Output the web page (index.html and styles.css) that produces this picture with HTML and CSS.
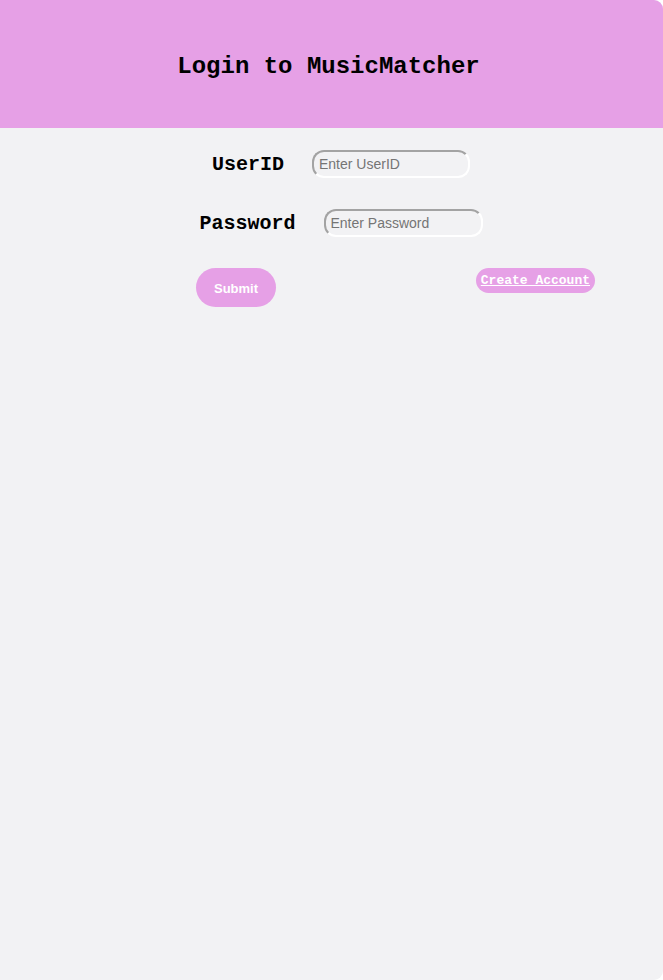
FILE: index.html
```html
<!DOCTYPE html>
<html>
<head>
<meta charset="utf-8">
<title>Login</title>
<link rel="stylesheet" href="styles.css">
</head>
<body>
<div class="page">
  <header class="header">
    <h2 class="title">Login to MusicMatcher</h2>
  </header>
  <form class="form">
    <div class="row">
      <label class="label" for="uid">UserID</label>
      <input class="field field-user" id="uid" type="text" placeholder="Enter UserID">
    </div>
    <div class="row">
      <label class="label" for="pwd">Password</label>
      <input class="field field-pass" id="pwd" type="password" placeholder="Enter Password">
    </div>
    <div class="actions">
      <button class="submit" type="button">Submit</button>
      <a class="create" href="#">Create Account</a>
    </div>
  </form>
</div>
</body>
</html>
```

FILE: styles.css
```css
html, body {
  margin: 0;
  padding: 0;
  background: #ffffff;
}
.page {
  width: 663px;
  height: 980px;
  background: #f2f2f4;
  border-radius: 0 9px 9px 0;
  overflow: hidden;
}
.header {
  height: 128px;
  background: #e6a0e6;
  display: flex;
  align-items: center;
  justify-content: center;
}
.title {
  margin: 0;
  font-family: "Liberation Mono", "Courier New", monospace;
  font-weight: bold;
  font-size: 24px;
  color: #000;
  padding: 4px 6px 0 0;
}
.form {
  display: flex;
  flex-direction: column;
  gap: 31px;
  padding-top: 22px;
}
.row {
  display: flex;
  align-items: center;
  justify-content: center;
  gap: 28px;
  padding-left: 19px;
  height: 28px;
}
.label {
  font-family: "Liberation Mono", "Courier New", monospace;
  font-weight: bold;
  font-size: 20px;
  color: #000;
}
.row-pass .label {
  margin-left: 1px;
}
.field {
  box-sizing: border-box;
  height: 28px;
  width: 158px;
  border: 2px solid #a3a3a3;
  border-right-color: #ffffff;
  border-bottom-color: #ffffff;
  border-radius: 12px;
  background: transparent;
  padding: 0 5px;
  font-family: "Liberation Sans", Arial, sans-serif;
  font-size: 14px;
  color: #333;
  outline: none;
}
.field-pass {
  width: 159px;
}
.field::placeholder {
  color: #757575;
}
.actions {
  display: flex;
  align-items: flex-start;
  justify-content: space-between;
  padding-left: 196px;
  padding-right: 68px;
}
.submit {
  width: 80px;
  height: 39px;
  border: none;
  border-radius: 20px;
  background: #e6a0e6;
  color: #ffffff;
  font-family: "Liberation Sans", Arial, sans-serif;
  font-weight: bold;
  font-size: 13px;
  padding: 2px 0 0;
  cursor: pointer;
}
.create {
  display: block;
  height: 25px;
  line-height: 26px;
  padding: 0 5px;
  border-radius: 13px;
  background: #e6a0e6;
  color: #ffffff;
  font-family: "Liberation Mono", "Courier New", monospace;
  font-weight: bold;
  font-size: 13px;
  text-decoration: underline;
}
```
